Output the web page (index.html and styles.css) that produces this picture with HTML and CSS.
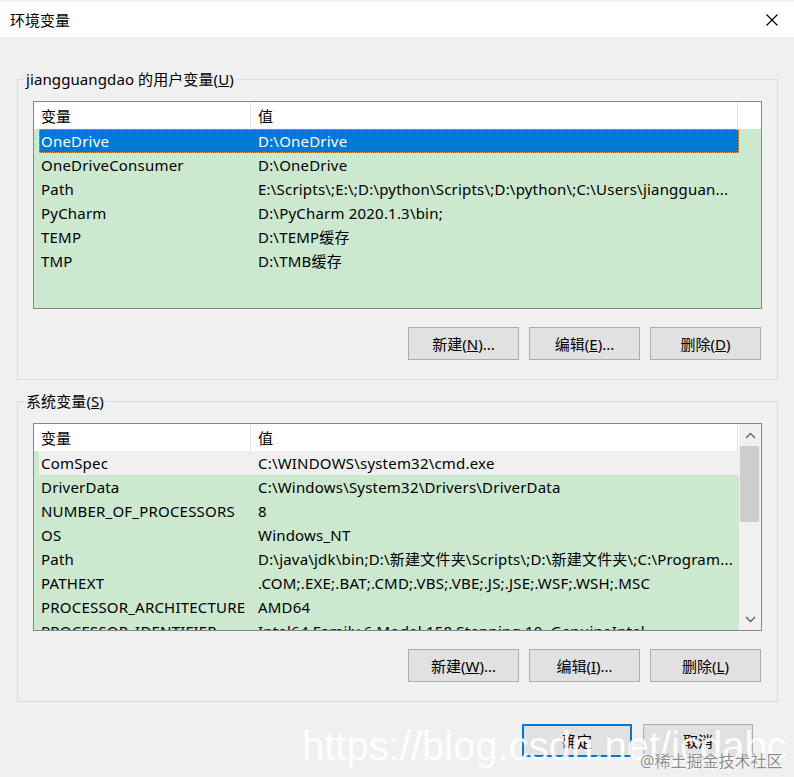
FILE: index.html
```html
<!DOCTYPE html>
<html lang="zh-CN">

<head>
    <meta charset="UTF-8">
    <title>环境变量</title>
    <link rel="stylesheet" href="styles.css">
</head>

<body>

    <div class="titlebar">
        <span class="title">环境变量</span>
        <svg class="close" width="12" height="12" viewBox="0 0 12 12">
            <path d="M0.5 0.5 L11.5 11.5 M11.5 0.5 L0.5 11.5" stroke="#000" stroke-width="1.1" fill="none" />
        </svg>
    </div>

    <div class="dialog">
        <fieldset class="group">
            <legend>jiangguangdao 的用户变量(<u>U</u>)</legend>
            <div class="list">
                <div class="list-main">
                    <div class="list-head">
                        <div class="col">变量</div>
                        <div class="col">值</div>
                        <div class="col"></div>
                    </div>
                    <div class="row selected"><span>OneDrive</span><span>D:\OneDrive</span></div>
                    <div class="row"><span>OneDriveConsumer</span><span>D:\OneDrive</span></div>
                    <div class="row"><span>Path</span><span>E:\Scripts\;E:\;D:\python\Scripts\;D:\python\;C:\Users\jiangguan...</span></div>
                    <div class="row"><span>PyCharm</span><span>D:\PyCharm 2020.1.3\bin;</span></div>
                    <div class="row"><span>TEMP</span><span>D:\TEMP缓存</span></div>
                    <div class="row"><span>TMP</span><span>D:\TMB缓存</span></div>
                </div>
            </div>
            <div class="buttons">
                <button class="btn">新建(<u>N</u>)...</button>
                <button class="btn">编辑(<u>E</u>)...</button>
                <button class="btn">删除(<u>D</u>)</button>
            </div>
        </fieldset>

        <fieldset class="group">
            <legend>系统变量(<u>S</u>)</legend>
            <div class="list">
                <div class="list-main">
                    <div class="list-head">
                        <div class="col">变量</div>
                        <div class="col">值</div>
                        <div class="col"></div>
                    </div>
                    <div class="row hot"><span>ComSpec</span><span>C:\WINDOWS\system32\cmd.exe</span></div>
                    <div class="row"><span>DriverData</span><span>C:\Windows\System32\Drivers\DriverData</span></div>
                    <div class="row"><span>NUMBER_OF_PROCESSORS</span><span>8</span></div>
                    <div class="row"><span>OS</span><span>Windows_NT</span></div>
                    <div class="row"><span>Path</span><span>D:\java\jdk\bin;D:\新建文件夹\Scripts\;D:\新建文件夹\;C:\Program...</span></div>
                    <div class="row"><span>PATHEXT</span><span>.COM;.EXE;.BAT;.CMD;.VBS;.VBE;.JS;.JSE;.WSF;.WSH;.MSC</span></div>
                    <div class="row"><span>PROCESSOR_ARCHITECTURE</span><span>AMD64</span></div>
                    <div class="row"><span>PROCESSOR_IDENTIFIER</span><span>Intel64 Family 6 Model 158 Stepping 10, GenuineIntel</span></div>
                </div>
                <div class="scrollbar">
                    <div class="arrow">
                        <svg width="11" height="7" viewBox="0 0 11 7">
                            <path d="M1 6 L5.5 1.5 L10 6" stroke="#606060" stroke-width="1.4" fill="none" />
                        </svg>
                    </div>
                    <div class="track">
                        <div class="thumb"></div>
                    </div>
                    <div class="arrow">
                        <svg width="11" height="7" viewBox="0 0 11 7">
                            <path d="M1 1 L5.5 5.5 L10 1" stroke="#606060" stroke-width="1.4" fill="none" />
                        </svg>
                    </div>
                </div>
            </div>
            <div class="buttons">
                <button class="btn">新建(<u>W</u>)...</button>
                <button class="btn">编辑(<u>I</u>)...</button>
                <button class="btn">删除(<u>L</u>)</button>
            </div>
        </fieldset>

        <div class="footer">
            <button class="btn primary">确定</button>
            <button class="btn">取消</button>
        </div>
    </div>

    <div class="watermark">https://blog.csdn.net/jcdabc</div>
    <div class="juejin">@稀土掘金技术社区</div>

</body>

</html>
```

FILE: styles.css
```css
:root {
    --bg-color: #f0f0f0;
    --list-bg: #cce8cf;
    --select-color: #0078d7;
    --border-color: #828790;
    --group-border: #dcdcdc;
    --btn-bg: #e1e1e1;
    --btn-border: #adadad;
}

body {
    margin: 0;
    width: 794px;
    height: 777px;
    overflow: hidden;
    position: relative;
    background-color: var(--bg-color);
    font-family: "Noto Sans", "Noto Sans CJK SC", sans-serif;
    font-size: 15px;
    color: #000;
}

.titlebar {
    height: 35px;
    margin-top: 2px;
    background-color: #fff;
    display: flex;
    align-items: center;
    justify-content: space-between;
    padding: 0 16px 0 10px;
}

.close {
    display: block;
}

.dialog {
    padding: 32px 16px 0 17px;
}

.group {
    margin: 0;
    padding: 12px 15px 19px;
    border: 1px solid var(--group-border);
    min-width: 0;
}

.group + .group {
    margin-top: 11px;
}

.group legend {
    margin-left: -9px;
    padding: 0 2px;
    line-height: 20px;
    letter-spacing: 0.1px;
}

.list {
    height: 208px;
    box-sizing: border-box;
    border: 1px solid var(--border-color);
    background-color: var(--list-bg);
    display: flex;
    overflow: hidden;
}

.list-main {
    flex: 1;
    min-width: 0;
}

.list-head {
    display: grid;
    grid-template-columns: 217px 487px 1fr;
    height: 27px;
    background-color: #fff;
}

.list-head .col {
    box-sizing: border-box;
    padding-left: 7px;
    line-height: 28px;
    border-right: 1px solid #e5e5e5;
}

.list-head .col:last-child {
    border-right: none;
}

.row {
    display: grid;
    grid-template-columns: 212px 1fr;
    width: 700px;
    height: 24px;
    line-height: 24px;
    margin-left: 5px;
    white-space: nowrap;
    letter-spacing: 0.2px;
}

.row span {
    overflow: hidden;
    padding-left: 2px;
}

.row span + span {
    padding-left: 7px;
}

.row.selected {
    background-color: var(--select-color);
    color: #fff;
    outline: 1px dotted #f29d38;
    outline-offset: -1px;
}

.row.hot {
    background-color: #f0f0f0;
}

.scrollbar {
    width: 22px;
    background-color: #f0f0f0;
    display: flex;
    flex-direction: column;
}

.scrollbar .arrow {
    height: 22px;
    display: flex;
    align-items: center;
    justify-content: center;
}

.scrollbar .track {
    flex: 1;
}

.scrollbar .thumb {
    height: 76px;
    margin: 0 2px 0 1px;
    background-color: #cdcdcd;
}

.buttons {
    display: flex;
    justify-content: flex-end;
    gap: 10px;
    margin-top: 18px;
    padding-right: 1px;
}

.btn {
    width: 111px;
    height: 33px;
    box-sizing: border-box;
    padding: 0;
    background-color: var(--btn-bg);
    border: 1px solid var(--btn-border);
    font: inherit;
    color: #000;
}

.btn.primary {
    border: 2px solid var(--select-color);
}

.footer {
    display: flex;
    justify-content: flex-end;
    gap: 11px;
    margin-top: 22px;
    padding-right: 25px;
}

.footer .btn {
    width: 110px;
}

.watermark {
    position: absolute;
    left: 302px;
    top: 726px;
    font-family: "Liberation Sans", Arial, sans-serif;
    font-size: 40px;
    line-height: 40px;
    color: rgba(255, 255, 255, 0.92);
    white-space: nowrap;
}

.juejin {
    position: absolute;
    left: 640px;
    top: 750px;
    font-size: 16px;
    line-height: 22px;
    color: rgba(120, 120, 120, 0.85);
    text-shadow: 0 0 2px #fff, 0 0 1px #fff;
    white-space: nowrap;
}
```
